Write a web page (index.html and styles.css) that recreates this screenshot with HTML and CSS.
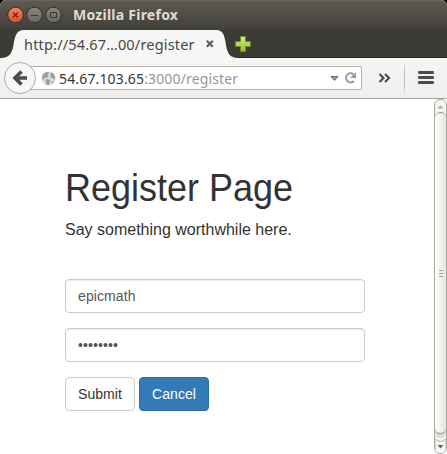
FILE: index.html
```
<!DOCTYPE html>
<html lang="en">
<head>
<meta charset="utf-8">
<title>Register</title>
<link rel="stylesheet" href="styles.css">
</head>
<body>
<div class="window">
  <header class="titlebar">
    <svg class="controls" width="60" height="18" viewBox="0 0 60 18">
      <defs>
        <linearGradient id="orange" x2="0" y2="1"><stop stop-color="#f58563"/><stop offset="1" stop-color="#e04c1c"/></linearGradient>
        <linearGradient id="gray" x2="0" y2="1"><stop stop-color="#89867d"/><stop offset="1" stop-color="#68665f"/></linearGradient>
      </defs>
      <circle cx="9.5" cy="9" r="7.8" fill="url(#orange)" stroke="#34322d"/>
      <circle cx="28.5" cy="9" r="7.8" fill="url(#gray)" stroke="#34322d"/>
      <circle cx="47.5" cy="9" r="7.8" fill="url(#gray)" stroke="#34322d"/>
      <path d="M7 6.500l5 5M12 6.500l-5 5" stroke="#61291a" stroke-width="1.200"/>
      <path d="M25 9.500h7M44.500 6.500h6v5h-6z" fill="none" stroke="#3b3934"/>
    </svg>
    <span class="window-title">Mozilla Firefox</span>
  </header>
  <nav class="tabs">
    <svg width="24" height="28" viewBox="0 0 24 28"><path d="M0 28C9 28 12 24 13.500 15C15 5 17 0 24 0V28Z" fill="#f6f6f5"/></svg>
    <div class="tab">
      <span class="tab-title">http://54.67…00/register</span>
      <svg class="tab-close" width="10" height="10" viewBox="0 0 10 10"><path d="M1.800 1.800l6 6M7.800 1.800l-6 6" stroke="#5d5d5b" stroke-width="2.200"/></svg>
    </div>
    <svg width="23" height="28" viewBox="0 0 23 28"><path d="M-1 0C6 0 7.500 5 9 15C10.500 24 13 28 22 28H-1Z" fill="#f6f6f5"/></svg>
    <svg class="new-tab" width="18" height="18" viewBox="0 0 18 18"><defs><linearGradient id="plus" x2="0" y2="1"><stop stop-color="#d5e98c"/><stop offset="1" stop-color="#9cbf29"/></linearGradient></defs><path d="M6.500 1.500h5v5h5v5h-5v5h-5v-5h-5v-5h5z" fill="url(#plus)" stroke="#688c20"/></svg>
  </nav>
  <div class="toolbar">
    <svg class="back" width="34" height="34" viewBox="0 0 34 34"><circle cx="17" cy="17" r="15.500" fill="#f7f7f6" stroke="#a5adb6"/><path d="M18.500 10.500l-6.500 6.500 6.500 6.500M12 17h12" fill="none" stroke="#4b4c49" stroke-width="3.600"/></svg>
    <div class="address">
      <svg class="globe" width="15" height="15" viewBox="0 0 15 15"><circle cx="7.500" cy="7.500" r="7" fill="#dedede"/><path d="M.8 8L1.500 4 4 1.500 7 .8 8 2.500 6.500 4 7.500 5.500 5.500 7 3 7 2.500 9ZM9.500 1L12.500 2.500 14.200 6 13.500 9 11.500 7 9.500 6.500 9 4 10 3ZM4 8.500L7 8 9.500 9.500 9 11.500 8 14 5.500 13.700 5 11.500ZM11 10l2 0-1.500 2.500-1 .5Z" fill="#a0a0a0"/></svg>
      <span class="url"><b>54.67.103.65</b>:3000/register</span>
      <svg class="address-icons" width="30" height="16" viewBox="0 0 30 16"><path d="M2 6.500h7L5.500 10.500Z" fill="#999" stroke="#6c6c6c"/><path d="M24.500 4.300A4.600 4.600 0 1 0 25 11" fill="none" stroke="#8f9baa" stroke-width="2"/><path d="M27 2v6h-6Z" fill="#8f9baa"/></svg>
    </div>
    <svg class="more" width="13" height="10" viewBox="0 0 13 10"><path d="M1.500 1l4 4-4 4M7 1l4 4-4 4" fill="none" stroke="#454744" stroke-width="2.100"/></svg>
    <i class="separator"></i>
    <svg class="menu" width="16" height="13" viewBox="0 0 16 13"><path d="M1.300 1.500h13.400M1.300 6.500h13.400M1.300 11.500h13.400" stroke="#4b4d4b" stroke-width="2.800" stroke-linecap="round"/></svg>
  </div>
  <div class="viewport">
    <main>
      <h1>Register Page</h1>
      <p>Say something worthwhile here.</p>
      <form>
        <input type="text" value="epicmath" aria-label="Username">
        <div class="password">••••••••</div>
        <div class="actions"><button type="button">Submit</button><button type="button" class="primary">Cancel</button></div>
      </form>
    </main>
    <aside class="scrollbar">
      <svg class="up" width="11" height="12" viewBox="0 0 11 12"><path d="M2.500 8.500L5.500 5.500l3 3Z" fill="#a5a5a1"/></svg>
      <div class="thumb"><i></i><i></i><i></i></div>
      <svg class="down" width="11" height="20" viewBox="0 0 11 20"><path d="M0 5Q5.500 10 11 5V20H0Z" fill="#f8f8f7" stroke="#b7b5b0"/><path d="M2.500 11h6L5.500 14.500Z" fill="#656562"/></svg>
    </aside>
  </div>
</div>
</body>
</html>
```
FILE: styles.css
```
* { box-sizing: border-box; }
body { margin: 0; background: #000; }
svg { display: block; flex: none; }
.window { width: 447px; height: 454px; display: flex; flex-direction: column; overflow: hidden; background: #fff; border-radius: 6px 6px 0 0; }
.titlebar { height: 30px; flex: none; display: flex; align-items: center; padding: 0 0 2px 6px; background: linear-gradient(#5d5a50, #403f39); border-top: 1px solid #68655b; }
.window-title { margin-left: 7px; color: #e0dcd2; font: bold 14px/20px "Noto Sans", sans-serif; letter-spacing: .25px; }
.tabs { height: 28px; flex: none; display: flex; background: #3c3b37; box-shadow: inset 0 -1px #292824; }
.tab { width: 193px; display: flex; align-items: center; background: #f6f6f5; color: #484846; font: 14.5px/20px "Noto Sans", sans-serif; letter-spacing: .18px; }
.tab-title { width: 181px; white-space: nowrap; }
.new-tab { margin: 5px 0 0 -6px; }
.toolbar { height: 41px; flex: none; display: flex; align-items: flex-start; background: linear-gradient(#f6f6f5, #efeeed); border-bottom: 1px solid #aaa69f; }
.back { margin: 3px 0 0 3px; z-index: 1; }
.address { width: 334px; height: 24px; margin: 8px 0 0 -9px; padding-left: 12px; display: flex; align-items: center; background: #fff; border: 1px solid #b5b1a9; border-radius: 0 2px 2px 0; }
.url { width: 270px; margin-left: 3px; white-space: nowrap; color: #979797; font: 14px/20px "Noto Sans", sans-serif; letter-spacing: .15px; padding-top: 1px; }
.url b { color: #373737; font-weight: normal; }
.more { margin: 15px 0 0 16px; }
.separator { width: 1px; height: 34px; margin: 3px 0 0 13px; background: linear-gradient(transparent, #b2bfce 30%, #b2bfce 70%, transparent); }
.menu { margin: 13px 0 0 13px; }
.viewport { flex: 1; min-height: 0; display: flex; font-family: "Liberation Sans", sans-serif; color: #333; }
main { width: 434px; padding: 68px 69px 0 65px; }
h1 { margin: 0; font: 36px/43px "Liberation Sans", sans-serif; white-space: nowrap; transform: scaleY(1.06); transform-origin: 0 60%; }
p { margin: 8px 0 38px; font-size: 16px; line-height: 23px; white-space: nowrap; }
input, .password { display: block; width: 300px; height: 34px; margin: 0 0 15px; padding: 6px 12px; border: 1px solid #ccc; border-radius: 4px; box-shadow: inset 0 1px 1px rgba(0,0,0,.075); color: #555; font: 14px/20px "Liberation Sans", sans-serif; }
input { letter-spacing: .1px; }
.password { letter-spacing: .1px; }
.actions { display: flex; gap: 4px; }
button { width: 70px; height: 34px; padding: 0; border: 1px solid #ccc; border-radius: 4px; background: #fff; color: #333; font: 14px/20px "Liberation Sans", sans-serif; letter-spacing: .05px; }
.primary { border-color: #2e6da4; background: #337ab7; color: #fff; }
.scrollbar { width: 13px; height: 355px; border: 1px solid #aaa8a3; border-radius: 6px; background: #f4f3f2; overflow: hidden; }
.thumb { width: 11px; height: 322px; border: 1px solid #8c8a85; border-width: 1px 0; border-radius: 6px; background: linear-gradient(90deg, #fff, #e4e3e0); display: flex; flex-direction: column; align-items: center; justify-content: center; gap: 2px; box-shadow: 0 4px 0 #dedddb; }
.thumb i { width: 4px; height: 1px; background: #a2a19e; }
```
